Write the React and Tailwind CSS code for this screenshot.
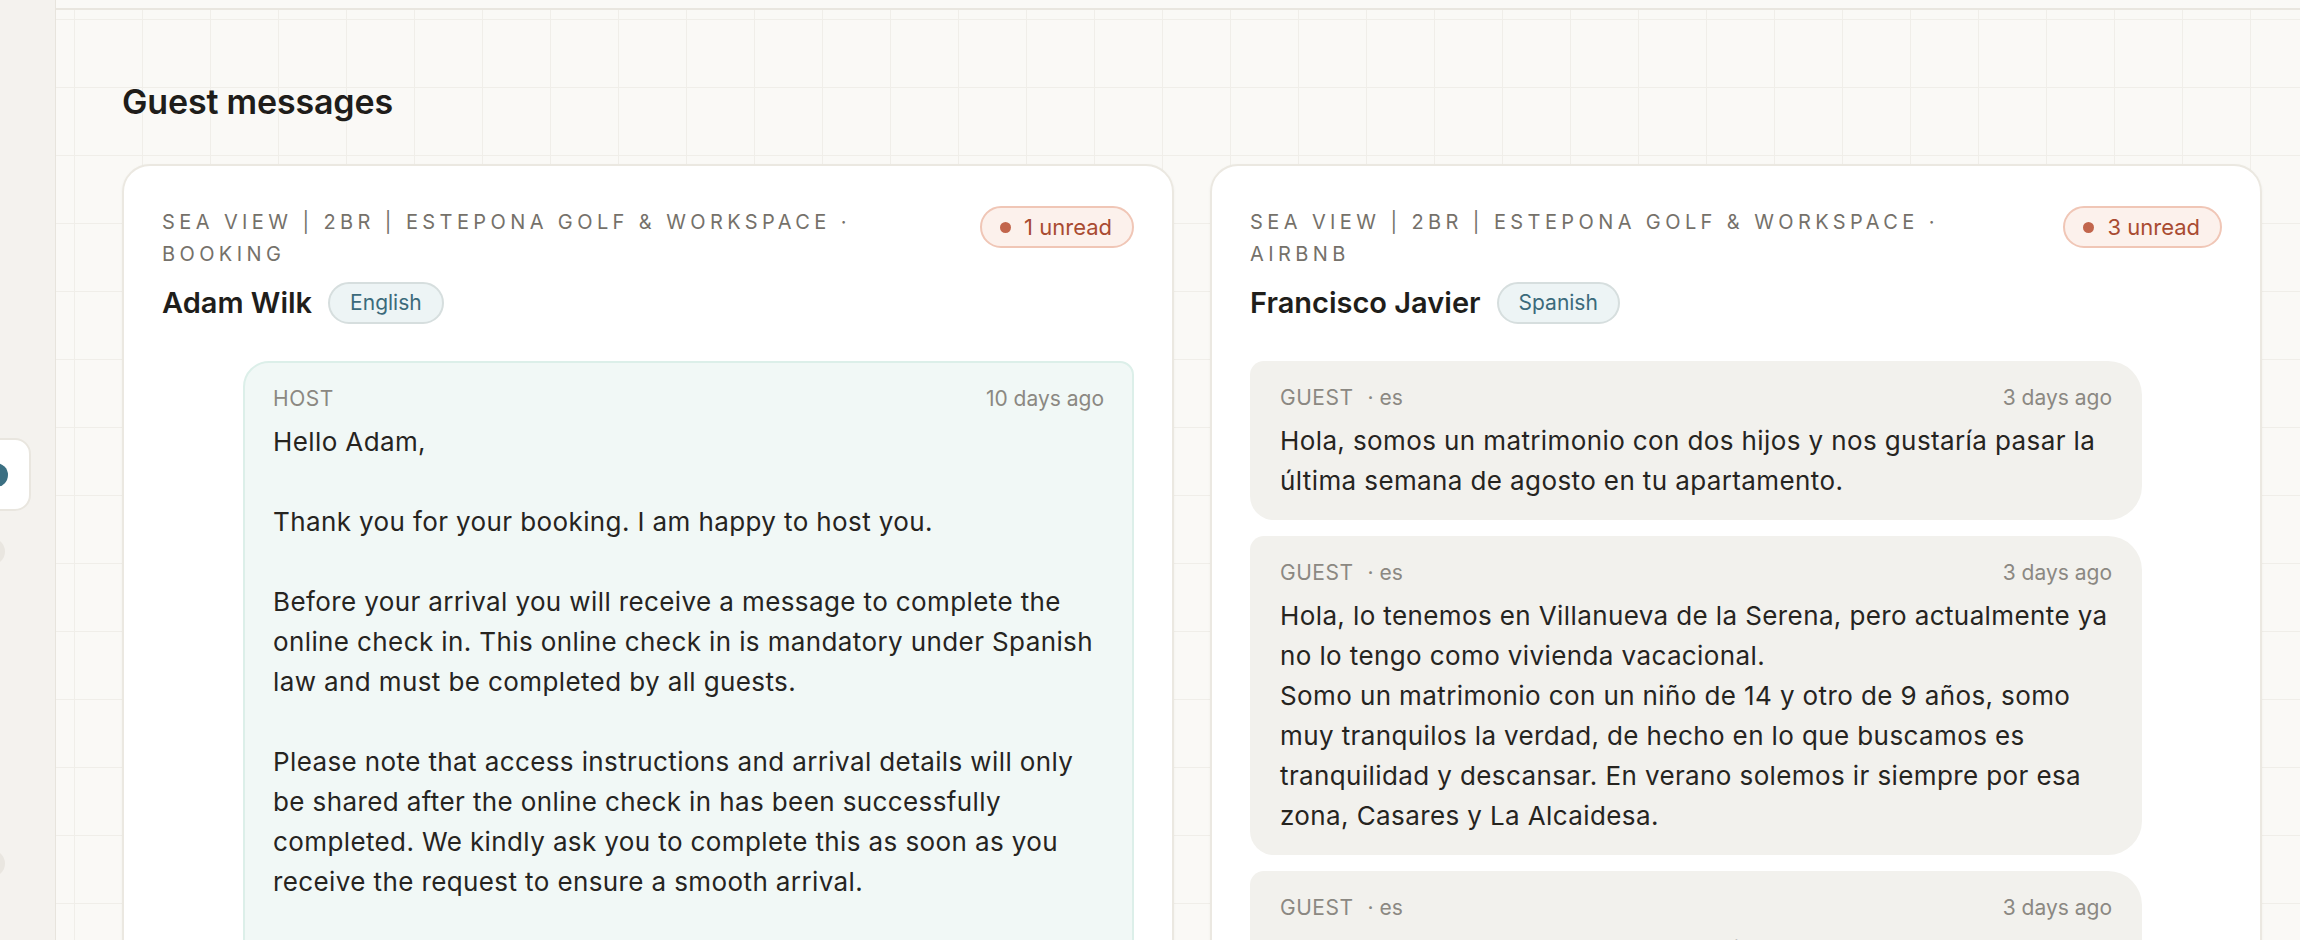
import { Fragment } from 'react';

// line breaks follow the thread view as it wraps at this card width
const conversations = [
    {
        id: 1,
        listing: 'Sea View | 2BR | Estepona Golf & Workspace',
        channel: 'Booking',
        guest: 'Adam Wilk',
        language: 'English',
        unread: 1,
        messages: [
            {
                id: 'm1', from: 'host', when: '10 days ago',
                text: 'Hello Adam,\n\nThank you for your booking. I am happy to host you.\n\nBefore your arrival you will receive a message to complete the\nonline check in. This online check in is mandatory under Spanish\nlaw and must be completed by all guests.\n\nPlease note that access instructions and arrival details will only\nbe shared after the online check in has been successfully\ncompleted. We kindly ask you to complete this as soon as you\nreceive the request to ensure a smooth arrival.\n\nKind regards,\nLaura',
            },
        ],
    },
    {
        id: 2,
        listing: 'Sea View | 2BR | Estepona Golf & Workspace',
        channel: 'Airbnb',
        guest: 'Francisco Javier',
        language: 'Spanish',
        unread: 3,
        messages: [
            {
                id: 'm2', from: 'guest', lang: 'es', when: '3 days ago',
                text: 'Hola, somos un matrimonio con dos hijos y nos gustaría pasar la\núltima semana de agosto en tu apartamento.',
            },
            {
                id: 'm3', from: 'guest', lang: 'es', when: '3 days ago',
                text: 'Hola, lo tenemos en Villanueva de la Serena, pero actualmente ya\nno lo tengo como vivienda vacacional.\nSomo un matrimonio con un niño de 14 y otro de 9 años, somo\nmuy tranquilos la verdad, de hecho en lo que buscamos es\ntranquilidad y descansar. En verano solemos ir siempre por esa\nzona, Casares y La Alcaidesa.',
            },
            {
                id: 'm4', from: 'guest', lang: 'es', when: '3 days ago',
                text: 'vamos a esperar su respuesta, gracias.\nUn saludo.',
            },
        ],
    },
];

function Bubble({ m }) {
    const isHost = m.from === 'host';
    return (
        <div className={isHost
            ? 'ml-auto w-[891px] rounded-[26px] rounded-tr-[14px] border-2 border-[#dcefe9] bg-[#f1f8f6] px-[28px] pt-[21px] pb-[18px]'
            : 'w-[892px] rounded-[34px] rounded-tl-[14px] rounded-bl-[24px] bg-[#f2f1ed] px-[30px] pt-[22px] pb-[19px]'}>
            <div className="flex items-center justify-between text-[21px] leading-[30px] text-[#8b8882]">
                <div>
                    <span className="tracking-wide">{isHost ? 'HOST' : 'GUEST'}</span>
                    {m.lang && <span className="ml-[14px]">· {m.lang}</span>}
                </div>
                <span>{m.when}</span>
            </div>
            <p className="mt-2 whitespace-pre-line text-[26px] leading-[40px] tracking-[0.015em] text-[#26241f]">{m.text}</p>
        </div>
    );
}

function ConversationCard({ c }) {
    return (
        <div className="rounded-[28px] border-2 border-[#ebe8e1] bg-white px-[38px] pt-10 shadow-[0_1px_3px_rgba(60,50,30,0.05)]">
            {/* Header */}
            <div className="flex items-start justify-between gap-6">
                <p className="max-w-[760px] text-[20px] leading-[32px] uppercase tracking-[0.22em] text-[#75716a]">
                    {c.listing} · {c.channel}
                </p>
                <span className="flex h-[42px] shrink-0 items-center gap-[13px] rounded-full border-2 border-[#f0c6b6] bg-[#fcf1ec] pl-[18px] pr-5 text-[22px] text-[#a94b31]">
                    <span className="h-[11px] w-[11px] rounded-full bg-[#c2654c]" />
                    {c.unread} unread
                </span>
            </div>
            <div className="mt-3 flex items-center gap-4">
                <h3 className="text-[29px] font-semibold leading-[42px] text-[#1f1e1b]">{c.guest}</h3>
                <span className="flex h-[42px] items-center rounded-full border-2 border-[#d6dede] bg-[#edf4f5] px-5 text-[21px] text-[#3b6a7b]">
                    {c.language}
                </span>
            </div>

            {/* Thread */}
            <div className="mt-[37px] flex flex-col gap-4 pb-10">
                {c.messages.map(m => (
                    <Fragment key={m.id}>
                        <Bubble m={m} />
                    </Fragment>
                ))}
            </div>
        </div>
    );
}

export default function App() {
    return (
        <div className="flex h-[940px] w-full overflow-hidden bg-[#faf9f6] font-['Inter','Noto_Sans',sans-serif]">

            {/* Collapsed sidebar */}
            <aside className="w-[56px] shrink-0 overflow-hidden border-r border-[#e7e4dd] bg-[#f4f2ee]">
                <div className="flex flex-col pt-[438px]">
                    <div className="-ml-[39px] flex h-[73px] w-[70px] items-center justify-center rounded-2xl border-2 border-[#e9e6df] bg-white">
                        <span className="h-6 w-6 rounded-full bg-[#3b6f82]" />
                    </div>
                    <span className="-ml-[22px] mt-[27px] h-[27px] w-[27px] rounded-full bg-[#e9e6e0]" />
                    <span className="-ml-[22px] mt-[285px] h-[27px] w-[27px] rounded-full bg-[#e9e6e0]" />
                </div>
            </aside>

            {/* Main */}
            <main className="flex min-w-0 flex-1 flex-col">
                <div className="h-[10px] shrink-0 border-b-2 border-[#e9e6df]" />
                <div className="flex-1 bg-[linear-gradient(to_right,#f0eee9_1px,transparent_1px),linear-gradient(to_bottom,#f0eee9_1px,transparent_1px)] bg-[size:68px_68px] bg-[position:18px_9px] pl-[66px] pr-[38px] pt-[72px]">
                    <h2 className="text-[34px] font-semibold leading-[40px] tracking-[-0.005em] text-[#1f1d1a]">Guest messages</h2>
                    <div className="mt-[42px] grid grid-cols-2 gap-9">
                        {conversations.map(c => <ConversationCard key={c.id} c={c} />)}
                    </div>
                </div>
            </main>
        </div>
    );
}
